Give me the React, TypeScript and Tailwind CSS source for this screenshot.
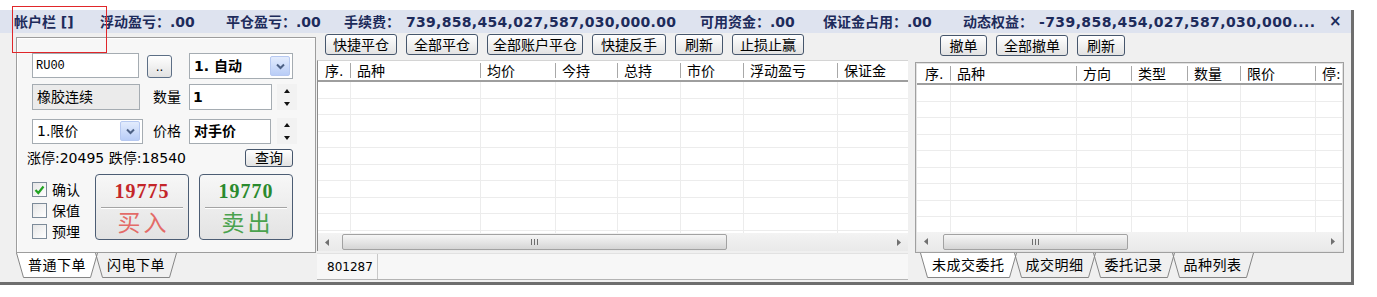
import React from 'react';

type Col = { label: string; w: string };

const midCols: Col[] = [
  { label: '序.', w: 'w-[32px]' },
  { label: '品种', w: 'w-[130px]' },
  { label: '均价', w: 'w-[75px]' },
  { label: '今持', w: 'w-[62px]' },
  { label: '总持', w: 'w-[63px]' },
  { label: '市价', w: 'w-[63px]' },
  { label: '浮动盈亏', w: 'w-[94px]' },
  { label: '保证金', w: 'w-[90px]' },
];

const rightCols: Col[] = [
  { label: '序.', w: 'w-[33px]' },
  { label: '品种', w: 'w-[126px]' },
  { label: '方向', w: 'w-[55px]' },
  { label: '类型', w: 'w-[56px]' },
  { label: '数量', w: 'w-[53px]' },
  { label: '限价', w: 'w-[75px]' },
  { label: '停:', w: 'w-[26px]' },
];

function Btn({ children, className = '' }: { children: React.ReactNode; className?: string }) {
  return (
    <div
      className={`h-[21px] shrink-0 flex items-center justify-center rounded-[3px] border border-[#46566c] bg-linear-to-b from-[#ffffff] to-[#e2e2e2] text-[14px] leading-none whitespace-nowrap ${className}`}
    >
      {children}
    </div>
  );
}

function DropArrow() {
  return (
    <div className="w-[20px] h-[20px] my-[2px] mr-[2px] ml-auto rounded-[2px] border border-[#b7c9f1] bg-linear-to-b from-[#e3ecfd] to-[#b9cdf7] flex items-center justify-center">
      <svg width="9" height="7" viewBox="0 0 9 7">
        <path d="M1 1.5 L4.5 5 L8 1.5" stroke="#4d6185" strokeWidth="2" fill="none" />
      </svg>
    </div>
  );
}

function Spinner() {
  return (
    <div className="w-[20px] h-[26px] flex flex-col bg-[#f2f2f2]">
      <div className="flex-1 flex items-center justify-center">
        <svg width="6" height="4" viewBox="0 0 6 4">
          <path d="M0 4 L3 0 L6 4 Z" fill="#111" />
        </svg>
      </div>
      <div className="flex-1 flex items-center justify-center">
        <svg width="6" height="4" viewBox="0 0 6 4">
          <path d="M0 0 L3 4 L6 0 Z" fill="#111" />
        </svg>
      </div>
    </div>
  );
}

function Check({ label, checked }: { label: string; checked?: boolean }) {
  return (
    <div className="h-[21px] flex items-center">
      <div className="w-[15px] h-[15px] border border-[#7d8b99] bg-linear-to-br from-[#e6e6e6] to-[#ffffff] flex items-center justify-center">
        {checked && (
          <svg width="11" height="10" viewBox="0 0 11 10">
            <path d="M1.5 5 L4.3 8 L9.5 1.5" stroke="#22a322" strokeWidth="2.2" fill="none" />
          </svg>
        )}
      </div>
      <span className="ml-[5px] text-[14px] leading-none">{label}</span>
    </div>
  );
}

function TradeBtn({ price, label, buy }: { price: string; label: string; buy?: boolean }) {
  return (
    <div className="w-[94px] h-[66px] rounded-[4px] border border-[#4c5d74] bg-linear-to-b from-[#f7f7f7] to-[#e3e3e3] flex flex-col">
      <div
        className={`h-[32px] flex items-center justify-center font-['Liberation_Serif',serif] font-bold text-[20px] tracking-[1px] ${
          buy ? 'text-[#c4262a]' : 'text-[#2a8a2e]'
        }`}
      >
        {price}
      </div>
      <div className="mx-[5px] border-t border-[#a4a4a4] shadow-[0_1px_0_#ffffff]" />
      <div
        className={`flex-1 flex items-center justify-center text-[23px] tracking-[3px] pl-[3px] leading-none ${
          buy ? 'text-[#e36b68]' : 'text-[#4aa24e]'
        }`}
      >
        {label}
      </div>
    </div>
  );
}

function Tab({ label, active, first }: { label: string; active?: boolean; first?: boolean }) {
  const fill = active ? '#ffffff' : 'none';
  return (
    <div className={`flex h-[25px] shrink-0 ${first ? '' : '-ml-[3px]'}`}>
      <svg width="8" height="25" viewBox="0 0 8 25" className="shrink-0">
        <path d="M0.5 0 L7.5 24.5 L8 24.5 L8 0 Z" fill={fill} />
        <path d="M0.5 0 L7.5 24.5 L8 24.5" stroke="#858585" fill="none" />
      </svg>
      <div
        className={`px-[4px] border-b border-[#858585] flex items-center text-[14px] tracking-[0.5px] leading-none whitespace-nowrap ${
          active ? 'bg-white' : ''
        }`}
      >
        {label}
      </div>
      <svg width="8" height="25" viewBox="0 0 8 25" className="shrink-0">
        <path d="M7.5 0 L0.5 24.5 L0 24.5 L0 0 Z" fill={fill} />
        <path d="M7.5 0 L0.5 24.5 L0 24.5" stroke="#858585" fill="none" />
      </svg>
    </div>
  );
}

function HScroll({ thumb }: { thumb: string }) {
  return (
    <div className="flex items-center h-full bg-linear-to-b from-[#f3f3f3] to-[#e9e9e9]">
      <div className="w-[18px] h-full flex items-center justify-center shrink-0">
        <svg width="4" height="7" viewBox="0 0 4 7">
          <path d="M4 0 L0 3.5 L4 7 Z" fill="#707070" />
        </svg>
      </div>
      <div
        className={`h-[16px] rounded-[2px] border border-[#a2a2a2] bg-linear-to-b from-[#f6f6f6] to-[#d5d5d5] flex items-center justify-center gap-[2px] shrink-0 ${thumb}`}
      >
        <div className="w-[1px] h-[6px] bg-[#6e6e6e]" />
        <div className="w-[1px] h-[6px] bg-[#6e6e6e]" />
        <div className="w-[1px] h-[6px] bg-[#6e6e6e]" />
      </div>
      <div className="flex-1" />
      <div className="w-[18px] h-full flex items-center justify-center shrink-0">
        <svg width="4" height="7" viewBox="0 0 4 7">
          <path d="M0 0 L4 3.5 L0 7 Z" fill="#707070" />
        </svg>
      </div>
    </div>
  );
}

function Grid({ cols, rows, first }: { cols: Col[]; rows: number; first: string }) {
  return (
    <>
      <div className="h-[21px] shrink-0 flex items-center border-b-2 border-[#9e9e9e] bg-white overflow-hidden">
        {cols.map((c, i) => (
          <div
            key={c.label}
            className={`${c.w} shrink-0 h-[15px] flex items-center text-[14px] leading-none whitespace-nowrap overflow-hidden ${
              i ? 'border-l border-[#a8a8a8] pl-[6px]' : first
            }`}
          >
            {c.label}
          </div>
        ))}
      </div>
      <div className="flex-1 overflow-hidden bg-white">
        {Array.from({ length: rows }).map((_, r) => (
          <div key={r} className="flex h-[16.5px] border-b border-[#ececec]">
            {cols.map((c, i) => (
              <div key={c.label} className={`${c.w} shrink-0 ${i ? 'border-l border-[#ececec]' : ''}`} />
            ))}
          </div>
        ))}
      </div>
    </>
  );
}

export default function App() {
  return (
    <div className="w-[1377px] h-[297px] bg-white relative overflow-hidden text-black font-['DejaVu_Sans','Noto_Sans_CJK_SC',sans-serif]">
      <div className="mt-[10px] w-[1354px] h-[275px] bg-[#f0f0f0] border-r-[3px] border-b-[3px] border-[#6e6e6e] flex flex-col">
        {/* account bar */}
        <div className="h-[23px] shrink-0 bg-[#dee3ef] flex items-center pl-[14px] text-[14px] font-bold text-[#1d2b5b] whitespace-nowrap leading-none">
          <div className="w-[86px] shrink-0">帐户栏 []</div>
          <div className="w-[126px] shrink-0">浮动盈亏：.00</div>
          <div className="w-[118px] shrink-0">平仓盈亏：.00</div>
          <div className="w-[356px] shrink-0">
            手续费：<span className="ml-[6px] tracking-[0.3px]">739,858,454,027,587,030,000.00</span>
          </div>
          <div className="w-[123px] shrink-0">可用资金：.00</div>
          <div className="w-[140px] shrink-0">保证金占用：.00</div>
          <div className="flex-1">
            动态权益：<span className="ml-[6px] tracking-[0.4px]">-739,858,454,027,587,030,000....</span>
          </div>
          <div className="w-[22px] text-[15px]">×</div>
        </div>

        <div className="flex flex-1 min-h-0">
          {/* order entry */}
          <div className="ml-[16px] w-[300px] shrink-0 flex flex-col pt-[4px]">
            <div className="h-[216px] border border-[#9d9d9d] bg-[#f7f7f7] shadow-[inset_1px_1px_0_#ffffff] pl-[15px] pt-[15px]">
              <div className="flex items-start">
                <div className="w-[107px] h-[25px] border border-[#a5acb2] bg-white pl-[3px] flex items-center font-['Liberation_Mono',monospace] text-[12px]">
                  RU00
                </div>
                <div className="ml-[8px] mt-[2px] w-[25px] h-[23px] rounded-[3px] border border-[#5d6f86] bg-linear-to-b from-[#ffffff] to-[#e2e2e2] flex items-end justify-center pb-[4px] text-[12px] leading-none">
                  ..
                </div>
                <div className="ml-[17px] w-[104px] h-[26px] border border-[#a5acb2] bg-white flex items-center">
                  <span className="pl-[4px] text-[14px] font-bold leading-none">1. 自动</span>
                  <DropArrow />
                </div>
              </div>

              <div className="flex items-center mt-[5px]">
                <div className="w-[108px] h-[26px] border border-[#a5acb2] bg-[#ebebeb] pl-[4px] flex items-center text-[14px] leading-none">
                  橡胶连续
                </div>
                <span className="ml-[13px] w-[28px] text-[14px] leading-none">数量</span>
                <div className="ml-[8px] w-[83px] h-[26px] border border-[#a5acb2] bg-white pl-[3px] flex items-center text-[14px] font-bold leading-none">
                  1
                </div>
                <div className="ml-[5px]">
                  <Spinner />
                </div>
              </div>

              <div className="flex items-center mt-[8px]">
                <div className="w-[111px] h-[25px] border border-[#a5acb2] bg-white flex items-center">
                  <span className="pl-[4px] text-[14px] leading-none">1.限价</span>
                  <DropArrow />
                </div>
                <span className="ml-[10px] w-[28px] text-[14px] leading-none">价格</span>
                <div className="ml-[8px] w-[82px] h-[25px] border border-[#a5acb2] bg-white pl-[4px] flex items-center text-[14px] font-bold leading-none">
                  对手价
                </div>
                <div className="ml-[6px]">
                  <Spinner />
                </div>
              </div>

              <div className="flex items-center mt-[5px] w-[261px]">
                <span className="-ml-[5px] text-[14px] leading-none">涨停:20495 跌停:18540</span>
                <Btn className="ml-auto w-[48px] !h-[18px] text-[13px]">查询</Btn>
              </div>

              <div className="flex mt-[7px]">
                <div className="w-[63px] flex flex-col pt-[5px]">
                  <Check label="确认" checked />
                  <Check label="保值" />
                  <Check label="预埋" />
                </div>
                <TradeBtn price="19775" label="买入" buy />
                <div className="ml-[10px]">
                  <TradeBtn price="19770" label="卖出" />
                </div>
              </div>
            </div>
            <div className="flex">
              <Tab label="普通下单" active first />
              <Tab label="闪电下单" />
            </div>
          </div>

          {/* positions */}
          <div className="ml-[1px] w-[591px] shrink-0 flex flex-col">
            <div className="flex gap-[9px] pl-[8px] mt-[1px]">
              <Btn className="w-[72px]">快捷平仓</Btn>
              <Btn className="w-[72px]">全部平仓</Btn>
              <Btn className="w-[96px]">全部账户平仓</Btn>
              <Btn className="w-[74px]">快捷反手</Btn>
              <Btn className="w-[48px]">刷新</Btn>
              <Btn className="w-[72px]">止损止赢</Btn>
            </div>
            <div className="mt-[5px] h-[191px] flex flex-col border-l border-[#8c8c8c] border-t border-t-[#d4d4d4]">
              <Grid cols={midCols} rows={10} first="pl-[7px]" />
              <div className="h-[18px] shrink-0">
                <HScroll thumb="ml-[6px] w-[385px]" />
              </div>
            </div>
            <div className="mt-[2px] h-[27px] flex bg-[#f7f7f7] border-t border-[#e2e2e2] border-b border-b-[#b4b4b4]">
              <div className="w-[61px] border-r border-[#c8c8c8] pl-[10px] flex items-center text-[12px] leading-none">801287</div>
            </div>
          </div>

          {/* orders */}
          <div className="ml-[7px] w-[429px] shrink-0 flex flex-col">
            <div className="flex gap-[9px] pl-[25px] mt-[2px]">
              <Btn className="w-[47px]">撤单</Btn>
              <Btn className="w-[72px]">全部撤单</Btn>
              <Btn className="w-[48px]">刷新</Btn>
            </div>
            <div className="mt-[6px] h-[191px] flex flex-col border border-[#a0a0a0] p-[1px] bg-[#e2e2e2]">
              <div className="flex-1 flex flex-col min-h-0 overflow-hidden">
                <Grid cols={rightCols} rows={10} first="pl-[8px]" />
                <div className="h-[19px] shrink-0">
                  <HScroll thumb="ml-[8px] w-[185px]" />
                </div>
              </div>
            </div>
            <div className="flex ml-[5px]">
              <Tab label="未成交委托" active first />
              <Tab label="成交明细" />
              <Tab label="委托记录" />
              <Tab label="品种列表" />
            </div>
          </div>
        </div>
      </div>

      <div className="absolute left-[12px] top-[6px] w-[95px] h-[47px] border border-[#e0262a]" />
    </div>
  );
}
